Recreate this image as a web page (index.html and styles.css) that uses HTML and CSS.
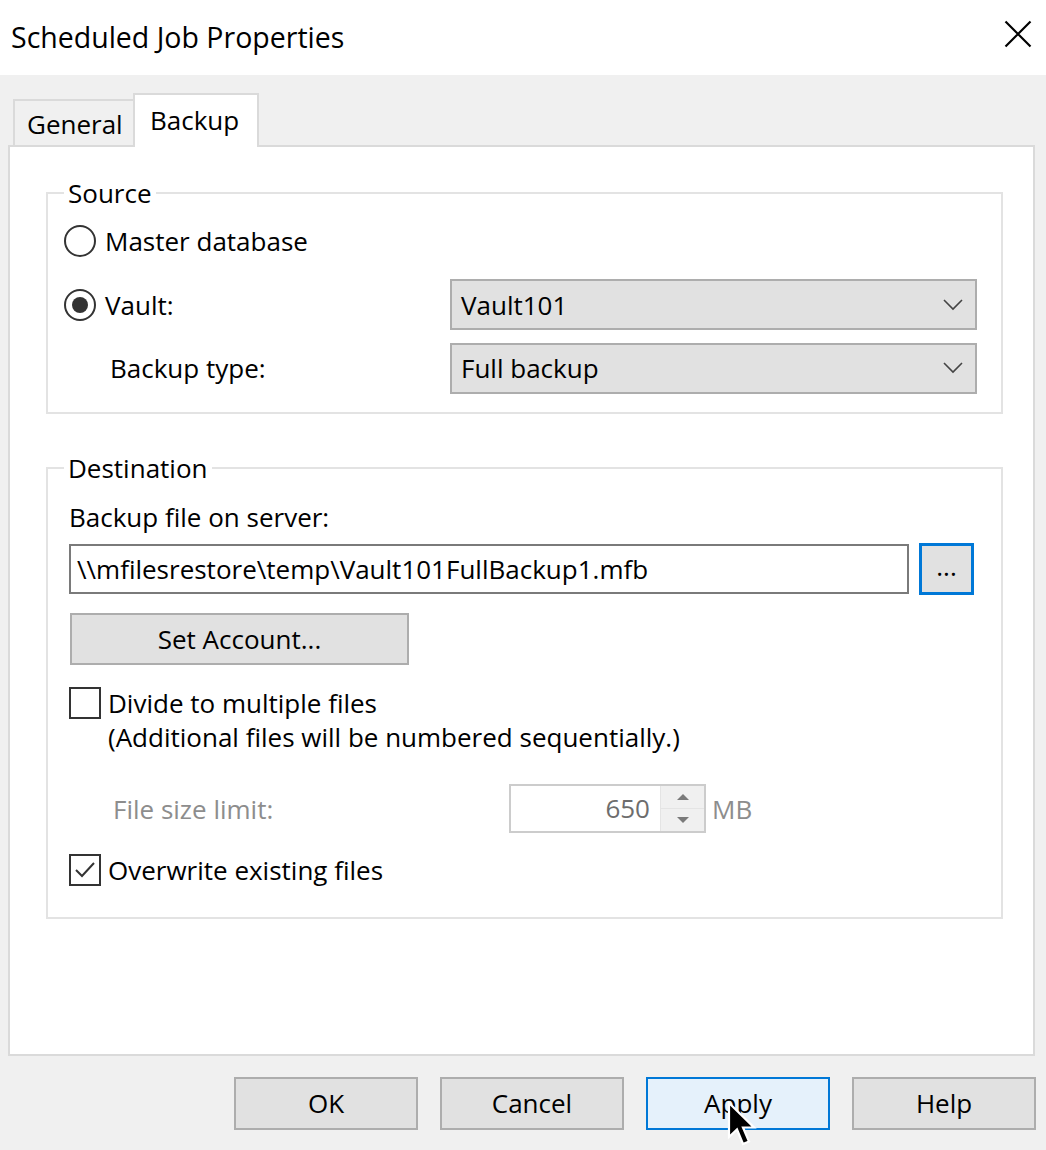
FILE: index.html
```html
<!DOCTYPE html>
<html lang="en">
<head>
<meta charset="utf-8">
<title>Scheduled Job Properties</title>
<link rel="stylesheet" href="styles.css">
</head>
<body>
<div class="window">
  <header class="titlebar">
    <span class="title">Scheduled Job Properties</span>
    <svg class="close" width="28" height="28" viewBox="0 0 28 28" aria-hidden="true">
      <path d="M1.5 1.5 L26.5 26.5 M26.5 1.5 L1.5 26.5" stroke="#000" stroke-width="2.2" fill="none"/>
    </svg>
  </header>
  <div class="client">
    <div class="tabs">
      <div class="tab">General</div>
      <div class="tab active">Backup</div>
    </div>
    <div class="panel">
      <fieldset class="group source">
        <legend>Source</legend>
        <div class="source-grid">
          <label class="radio"><span class="radio-circle"></span><span class="rtext">Master database</span></label>
          <span class="empty"></span>
          <label class="radio"><span class="radio-circle checked"></span><span class="rtext">Vault:</span></label>
          <div class="combo"><span class="combo-text">Vault101</span>
            <svg class="chev" width="20" height="12" viewBox="0 0 20 12"><path d="M1 1 L10 10 L19 1" stroke="#444" stroke-width="1.6" fill="none"/></svg>
          </div>
          <span class="indent">Backup type:</span>
          <div class="combo"><span class="combo-text">Full backup</span>
            <svg class="chev" width="20" height="12" viewBox="0 0 20 12"><path d="M1 1 L10 10 L19 1" stroke="#444" stroke-width="1.6" fill="none"/></svg>
          </div>
        </div>
      </fieldset>

      <fieldset class="group dest">
        <legend>Destination</legend>
        <div class="dest-body">
          <div class="label">Backup file on server:</div>
          <div class="file-row">
            <div class="textbox">\\mfilesrestore\temp\Vault101FullBackup1.mfb</div>
            <div class="browse">...</div>
          </div>
          <div class="btn set-account">Set Account...</div>
          <div class="check-row divide">
            <span class="checkbox"></span>
            <span class="ctext">Divide to multiple files<br>(Additional files will be numbered sequentially.)</span>
          </div>
          <div class="size-row">
            <span class="size-label">File size limit:</span>
            <div class="spinner">
              <span class="spin-value">650</span>
              <span class="spin-btns">
                <span class="spin-up"><svg width="12" height="8" viewBox="0 0 12 8"><path d="M0 7 L6 1 L12 7 Z" fill="#7a7a7a"/></svg></span>
                <span class="spin-down"><svg width="12" height="8" viewBox="0 0 12 8"><path d="M0 1 L6 7 L12 1 Z" fill="#7a7a7a"/></svg></span>
              </span>
            </div>
            <span class="unit">MB</span>
          </div>
          <div class="check-row overwrite">
            <span class="checkbox">
              <svg width="28" height="28" viewBox="0 0 28 28"><path d="M5 14 L11 20 L23 7" stroke="#333" stroke-width="2" fill="none"/></svg>
            </span>
            <span class="ctext">Overwrite existing files</span>
          </div>
        </div>
      </fieldset>
    </div>
    <div class="buttons">
      <div class="btn dlg">OK</div>
      <div class="btn dlg">Cancel</div>
      <div class="btn dlg default">Apply</div>
      <div class="btn dlg">Help</div>
    </div>
  </div>
  <svg class="cursor" width="30" height="50" viewBox="0 0 30 50" aria-hidden="true">
    <path d="M2 2 L2 36 L10 28.5 L16 43 L22 40.5 L16 26.5 L27 26.5 Z" fill="#000" stroke="#fff" stroke-width="2.2" stroke-linejoin="miter"/>
  </svg>
</div>
</body>
</html>
```

FILE: styles.css
```css
* { box-sizing: border-box; }

html, body {
  margin: 0;
  padding: 0;
  background: #ffffff;
}

body {
  font-family: "Open Sans", "Noto Sans", "Liberation Sans", sans-serif;
  font-size: 26px;
  color: #000;
}

.window {
  position: relative;
  width: 1046px;
  height: 1150px;
  overflow: hidden;
}

/* Title bar */
.titlebar {
  height: 75px;
  background: #fff;
  display: flex;
  align-items: center;
  justify-content: space-between;
  padding: 0 14px 2px 11px;
}

.title {
  font-size: 28.5px;
  letter-spacing: 0;
}

.close {
  display: block;
  margin-top: -6px;
}

/* Client area */
.client {
  background: #f0f0f0;
  height: 1075px;
  padding: 0 10px 0 8px;
}

.tabs {
  height: 70px;
  display: flex;
  align-items: flex-end;
  padding-left: 5px;
}

.tab {
  height: 46px;
  width: 122px;
  border: 2px solid #dadada;
  border-bottom: none;
  background: #f0f0f0;
  padding: 4px 0 0 12px;
  line-height: 38px;
}

.tab.active {
  height: 54px;
  width: 126px;
  margin-left: -2px;
  margin-bottom: -2px;
  background: #fff;
  position: relative;
  z-index: 2;
  padding: 0 0 0 15px;
  line-height: 50px;
}

.panel {
  height: 911px;
  margin-right: 1px;
  background: #fff;
  border: 2px solid #dadada;
  padding: 29px 30px 0 36px;
}

/* Group boxes */
.group {
  margin: 0;
  border: 2px solid #e3e3e3;
  padding: 0;
  min-width: 0;
}

.group legend {
  margin-left: 16px;
  padding: 0 4px;
  line-height: 34px;
}

.source-grid {
  display: grid;
  grid-template-columns: 386px 1fr;
  grid-template-rows: 50px 51px 50px;
  row-gap: 13px;
  padding: 6px 24px 19px 16px;
  align-items: center;
}

.radio {
  display: flex;
  align-items: center;
  gap: 9px;
}

.radio-circle {
  width: 32px;
  height: 32px;
  border: 2px solid #333;
  border-radius: 50%;
  display: flex;
  align-items: center;
  justify-content: center;
  flex: none;
}

.radio-circle.checked::after {
  content: "";
  width: 16px;
  height: 16px;
  border-radius: 50%;
  background: #333;
}

.indent {
  padding-left: 46px;
}

.combo {
  height: 51px;
  background: #e1e1e1;
  border: 2px solid #adadad;
  display: flex;
  align-items: center;
  justify-content: space-between;
  padding: 0 12px 0 9px;
}

.chev { display: block; }

/* Destination */
.dest {
  margin-top: 37px;
}

.dest-body {
  padding: 15px 27px 30px 21px;
  display: flex;
  flex-direction: column;
}

.label {
  line-height: 34px;
}

.file-row {
  display: flex;
  gap: 10px;
  margin-top: 9px;
  align-items: center;
}

.textbox {
  flex: 1;
  height: 50px;
  border: 2px solid #7a7a7a;
  background: #fff;
  line-height: 46px;
  padding-left: 6px;
  white-space: nowrap;
  overflow: hidden;
}

.browse {
  width: 55px;
  height: 52px;
  border: 3px solid #0078d7;
  background: #e1e1e1;
  text-align: center;
  line-height: 40px;
}

.btn {
  background: #e1e1e1;
  border: 2px solid #adadad;
  text-align: center;
}

.set-account {
  width: 339px;
  height: 52px;
  line-height: 48px;
  margin-top: 18px;
  margin-left: 1px;
}

.check-row {
  display: flex;
  align-items: flex-start;
  gap: 7px;
}

.checkbox {
  width: 32px;
  height: 32px;
  border: 2px solid #333;
  flex: none;
  display: flex;
  align-items: center;
  justify-content: center;
  margin-top: 1px;
}

.checkbox svg { display: block; }

.ctext {
  line-height: 34px;
}

.divide {
  margin-top: 21px;
}

.size-row {
  display: flex;
  align-items: center;
  margin-top: 30px;
  height: 49px;
}

.size-label {
  color: #8d8d8d;
  width: 440px;
  padding-left: 44px;
}

.spinner {
  width: 197px;
  height: 49px;
  border: 2px solid #cccccc;
  display: flex;
  background: #fff;
}

.spin-value {
  flex: 1;
  text-align: right;
  color: #6d6d6d;
  line-height: 45px;
  padding-right: 10px;
}

.spin-btns {
  width: 44px;
  display: flex;
  flex-direction: column;
  border-left: 1px solid #e4e4e4;
  background: #f0f0f0;
}

.spin-up, .spin-down {
  flex: 1;
  display: flex;
  align-items: center;
  justify-content: center;
}

.spin-up { border-bottom: 1px solid #e4e4e4; }

.unit {
  color: #8d8d8d;
  margin-left: 6px;
}

.overwrite {
  margin-top: 20px;
}

/* Dialog buttons */
.buttons {
  display: flex;
  justify-content: flex-end;
  gap: 22px;
  margin-top: 21px;
}

.dlg {
  width: 184px;
  height: 53px;
  line-height: 49px;
}

.dlg.default {
  background: #e5f1fb;
  border-color: #0078d7;
}

/* Mouse pointer overlay */
.cursor {
  position: absolute;
  left: 727px;
  top: 1101px;
}
```
